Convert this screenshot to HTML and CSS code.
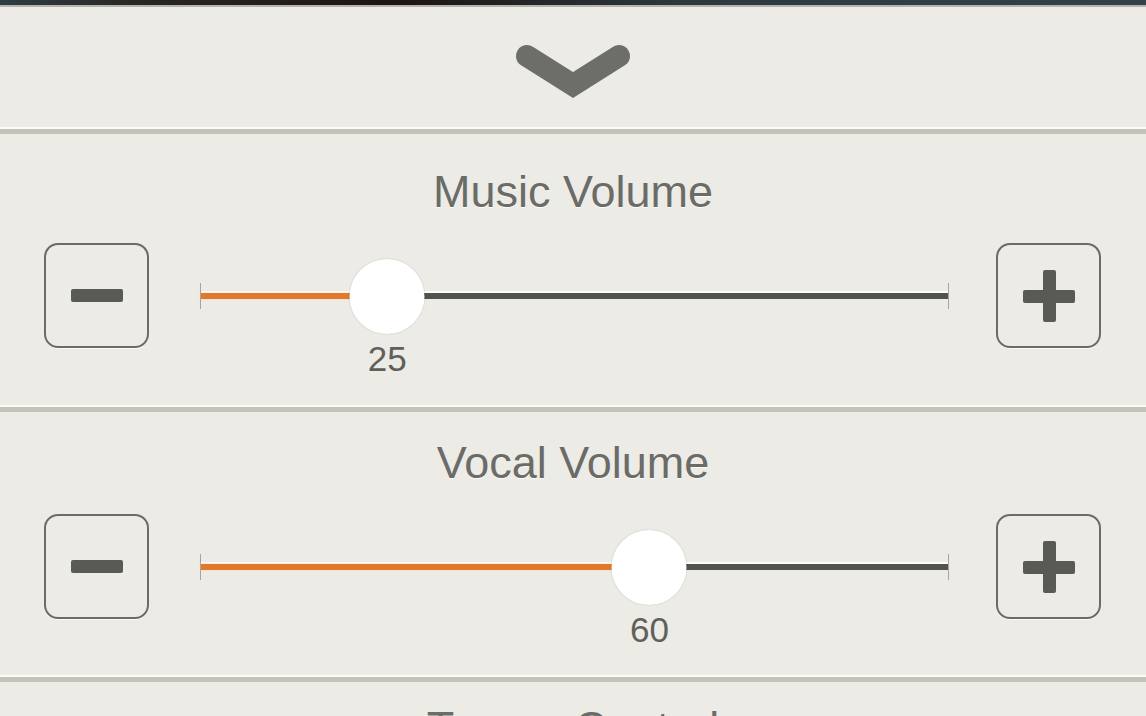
FILE: index.html
```html
<!DOCTYPE html>
<html lang="en">
<head>
  <meta charset="UTF-8">
  <meta name="viewport" content="width=device-width, initial-scale=1.0">
  <title>Volume Settings</title>
  <link rel="stylesheet" href="styles.css">
</head>
<body>
  <div class="cover-strip"></div>

  <div class="header">
    <button class="collapse" aria-label="Collapse">
      <svg width="116" height="56" viewBox="0 0 116 56">
        <polyline points="12,12 58,41 104,12" fill="none" stroke="#6d6d69" stroke-width="22" stroke-linecap="round" stroke-linejoin="miter"/>
      </svg>
    </button>
  </div>
  <div class="divider"></div>

  <div class="section first">
    <h2 class="section-title">Music Volume</h2>
    <div class="control-row">
      <button class="step-button" aria-label="Decrease"><span class="minus"></span></button>
      <div class="slider">
        <div class="track-fill" style="width: 25%"></div>
        <div class="thumb" style="left: 25%"><span class="value">25</span></div>
      </div>
      <button class="step-button" aria-label="Increase"><span class="plus"></span></button>
    </div>
  </div>
  <div class="divider"></div>

  <div class="section">
    <h2 class="section-title">Vocal Volume</h2>
    <div class="control-row">
      <button class="step-button" aria-label="Decrease"><span class="minus"></span></button>
      <div class="slider">
        <div class="track-fill" style="width: 60%"></div>
        <div class="thumb" style="left: 60%"><span class="value">60</span></div>
      </div>
      <button class="step-button" aria-label="Increase"><span class="plus"></span></button>
    </div>
  </div>
  <div class="divider"></div>

  <div class="section last">
    <h2 class="section-title">Tempo Control</h2>
  </div>
</body>
</html>
```

FILE: styles.css
```css
body {
  margin: 0;
  padding: 0;
  background-color: #ecebe6;
  font-family: "Liberation Sans", Arial, sans-serif;
  color: #6b6b67;
  overflow: hidden;
  height: 716px;
}
.cover-strip {
  height: 5px;
  background: linear-gradient(90deg, #2e3d44 0%, #2a2623 12%, #1d1412 35%, #2c3a40 60%, #33424a 100%);
  border-bottom: 2px solid #b4b4ac;
}
.header {
  height: 120px;
  display: flex;
  align-items: center;
  justify-content: center;
}
.collapse {
  background: none;
  border: none;
  padding: 0;
  margin-top: 10px;
  cursor: pointer;
}
.collapse svg {
  display: block;
}
.divider {
  height: 5px;
  background-color: #c3c3bb;
  border-top: 2px solid #fbfbf8;
}
.section {
  padding: 26px 0 56px;
}
.section.first {
  padding: 33px 0 57px;
}
.section.last {
  padding: 21px 0 0;
}
.section-title {
  margin: 0;
  font-size: 45px;
  line-height: 50px;
  font-weight: normal;
  text-align: center;
  color: #6b6b67;
  text-shadow: 0 1px 0 #fafaf7;
}
.control-row {
  display: flex;
  align-items: center;
  padding: 0 45px 0 44px;
  margin-top: 26px;
}
.step-button {
  width: 105px;
  height: 105px;
  flex: none;
  border: 2px solid #6b6b67;
  border-radius: 14px;
  background: transparent;
  display: flex;
  align-items: center;
  justify-content: center;
  padding: 0;
  cursor: pointer;
  box-shadow: 0 1px 0 #fafaf7;
}
.minus {
  display: block;
  width: 52px;
  height: 13px;
  border-radius: 2px;
  background-color: #595955;
}
.plus {
  display: block;
  position: relative;
  width: 52px;
  height: 52px;
}
.plus::before,
.plus::after {
  content: "";
  position: absolute;
  background-color: #595955;
  border-radius: 2px;
}
.plus::before {
  left: 0;
  right: 0;
  top: 20px;
  height: 13px;
}
.plus::after {
  top: 0;
  bottom: 0;
  left: 20px;
  width: 13px;
}
.slider {
  flex: 1;
  position: relative;
  height: 6px;
  margin: 0 47px 0 51px;
  background-color: #52524e;
  box-shadow: 0 -2px 0 rgba(255, 255, 255, 0.85);
}
.slider::before,
.slider::after {
  content: "";
  position: absolute;
  top: -10px;
  width: 1px;
  height: 26px;
  background-color: #a5a59f;
}
.slider::before {
  left: 0;
}
.slider::after {
  right: 0;
}
.track-fill {
  height: 100%;
  background-color: #e2782a;
  box-shadow: 0 0 2px #f6d2b0;
}
.thumb {
  position: absolute;
  top: 50%;
  width: 75px;
  height: 75px;
  margin-top: -37px;
  transform: translateX(-50%);
  border-radius: 50%;
  background-color: #fff;
  box-shadow: 0 0 2px rgba(0, 0, 0, 0.18);
}
.value {
  position: absolute;
  top: 82px;
  left: 50%;
  transform: translateX(-50%);
  font-size: 35px;
  line-height: 35px;
  color: #5f5f5b;
}
```
